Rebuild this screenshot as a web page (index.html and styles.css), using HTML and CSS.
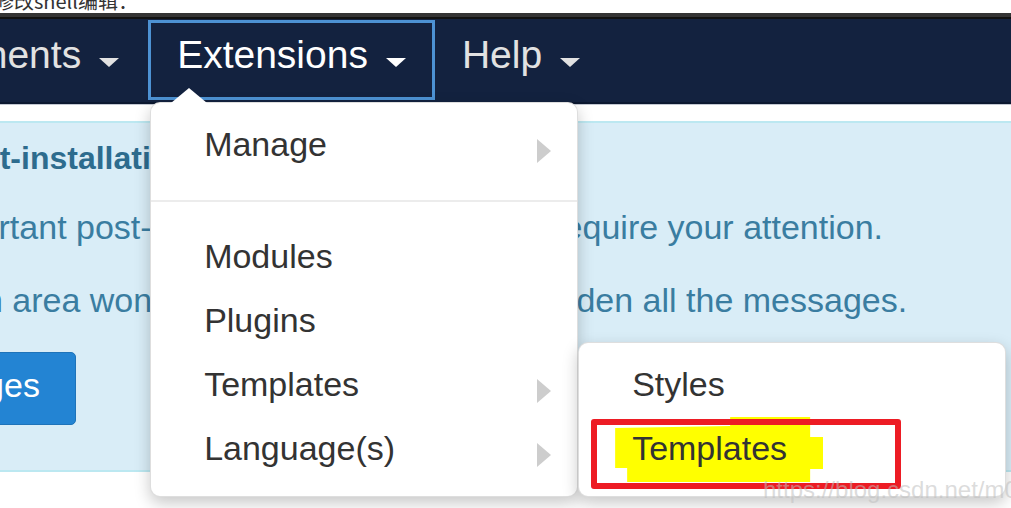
FILE: index.html
```html
<!DOCTYPE html>
<html lang="en">
<head>
<meta charset="utf-8">
<title>Extensions menu</title>
<link rel="stylesheet" href="styles.css">
</head>
<body>
<div class="note"><span>修改shell编辑：</span></div>
<div class="chrome"></div>
<nav class="navbar">
  <ul class="nav">
    <li class="nav-item">Components<span class="caret"></span></li>
    <li class="nav-item open">Extensions<span class="caret"></span>
      <ul class="menu">
        <li class="menu-item">Manage<span class="sub-arrow"></span></li>
        <li class="divider"></li>
        <li class="menu-item">Modules</li>
        <li class="menu-item">Plugins</li>
        <li class="menu-item">Templates<span class="sub-arrow"></span>
          <ul class="menu submenu">
            <li class="menu-item">Styles</li>
            <li class="menu-item marked"><span class="hl"></span><span class="label">Templates</span><span class="redbox"></span></li>
          </ul>
        </li>
        <li class="menu-item">Language(s)<span class="sub-arrow"></span></li>
      </ul>
    </li>
    <li class="nav-item help">Help<span class="caret"></span></li>
  </ul>
</nav>
<main class="content">
  <div class="alert">
    <h4>You have post-installation messages</h4>
    <p>There are important post-installation messages that require your attention.</p>
    <p class="second">This information area won't appear when you have hidden all the messages.</p>
    <a class="btn">Review Messages</a>
  </div>
</main>
<div class="watermark">https://blog.csdn.net/m0_4</div>
</body>
</html>
```

FILE: styles.css
```css
html, body {
  margin: 0;
  padding: 0;
}
body {
  width: 1011px;
  height: 508px;
  overflow: hidden;
  position: relative;
  background: #fff;
  font-family: "Liberation Sans", Arial, "Noto Sans CJK SC", sans-serif;
}
.note {
  height: 13px;
  overflow: hidden;
}
.note span {
  display: block;
  margin: -9px 0 0 -6px;
  font: 20px/20px "Noto Sans CJK SC", sans-serif;
  color: #333;
  white-space: nowrap;
}
.chrome {
  height: 2px;
  border-top: 4px solid #343434;
  background: #111;
}
.navbar {
  height: 83px;
  background: #13223f;
  border-bottom: 2px solid #0c1830;
  box-shadow: 0 1px 0 #c3c8d2;
  position: relative;
  z-index: 5;
}
.nav {
  list-style: none;
  margin: 0 0 0 -169px;
  padding: 0;
  display: flex;
}
.nav-item {
  position: relative;
  display: flex;
  align-items: center;
  height: 64px;
  margin-top: 1px;
  padding: 0 26px 10px;
  border: 3px solid transparent;
  color: #e2e2e2;
  font-size: 39px;
  line-height: 64px;
  white-space: nowrap;
}
.nav-item.help {
  padding-left: 24px;
}
.nav-item.open {
  border-color: #4d92d3;
  color: #fff;
}
.caret {
  width: 0;
  height: 0;
  border-top: 9px solid currentColor;
  border-left: 10px solid transparent;
  border-right: 10px solid transparent;
  margin: 15px 0 0 18px;
}
.menu {
  list-style: none;
  margin: 0;
  padding: 9px 0 16px;
  position: absolute;
  left: -1px;
  top: 79px;
  width: 428px;
  box-sizing: border-box;
  background: #fff;
  border: 1px solid rgba(0, 0, 0, 0.13);
  border-radius: 10px;
  box-shadow: 0 6px 16px rgba(0, 0, 0, 0.22);
  color: #333;
  font-size: 34px;
  line-height: 64px;
}
.menu::before {
  content: "";
  position: absolute;
  left: 20px;
  top: -15px;
  border-left: 18px solid transparent;
  border-right: 18px solid transparent;
  border-bottom: 15px solid #fff;
}
.menu-item {
  position: relative;
  height: 64px;
  padding-left: 53px;
}
.divider {
  height: 2px;
  background: #ececec;
  margin: 24px 0 22px;
}
.sub-arrow {
  position: absolute;
  right: 26px;
  top: 27px;
  border-left: 14px solid #cdcdcd;
  border-top: 12px solid transparent;
  border-bottom: 12px solid transparent;
}
.submenu {
  left: calc(100% + 1px);
  top: -10px;
  z-index: 2;
}
.submenu::before {
  display: none;
}
.hl {
  position: absolute;
  left: 36px;
  top: 1px;
  width: 208px;
  height: 65px;
  background: #ffff00;
  clip-path: polygon(0 11px, 115px 9px, 115px 0, 195px 0, 195px 20px, 208px 20px, 208px 52px, 195px 52px, 195px 65px, 12px 65px, 12px 51px, 0 51px);
}
.label {
  position: relative;
}
.redbox {
  position: absolute;
  left: 12px;
  top: 3px;
  width: 310px;
  height: 70px;
  box-sizing: border-box;
  border: 6px solid #ed1c24;
  border-radius: 3px;
}
.content {
  margin-top: 17px;
}
.alert {
  margin-left: -260px;
  width: 1400px;
  padding: 15px 0 45px 26px;
  background: #d9edf7;
  border: 2px solid #bce8f1;
  color: #3a7da1;
}
.alert h4 {
  margin: 0 0 0 26px;
  font-size: 32px;
  line-height: 40px;
  font-weight: bold;
  color: #2d6c8e;
  white-space: nowrap;
}
.alert p {
  margin: 25px 0 0;
  font-size: 34px;
  line-height: 48px;
  white-space: nowrap;
}
.alert p.second {
  margin-left: -7px;
}
.btn {
  display: block;
  width: max-content;
  margin: 28px 0 0 -40px;
  padding: 4px 35px 11px;
  line-height: 56px;
  font-size: 34px;
  color: #fff;
  background: #2384d3;
  border: 1px solid #1e73b9;
  border-radius: 5px;
}
.watermark {
  position: absolute;
  left: 763px;
  top: 476px;
  font-size: 24px;
  line-height: 28px;
  color: rgba(190, 190, 190, 0.55);
  white-space: nowrap;
  z-index: 10;
}
```
